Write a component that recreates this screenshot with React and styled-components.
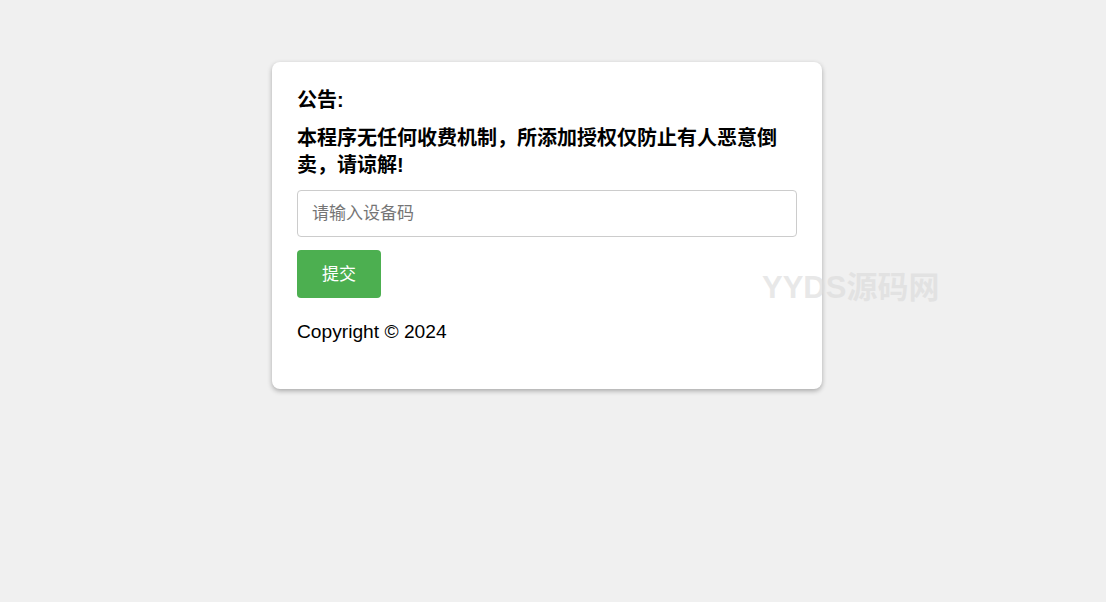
import React, { useState } from "react";
import styled, { createGlobalStyle } from "styled-components";

const GlobalStyle = createGlobalStyle`
  html, body {
    margin: 0;
    padding: 0;
    background: #f0f0f0;
    font-family: "Liberation Sans", "Noto Sans CJK SC", sans-serif;
    color: #000;
  }
`;

const Page = styled.div`
  min-height: 602px;
  padding: 62px 12px 0 0;
  box-sizing: border-box;
  position: relative;
  overflow: hidden;
`;

const Card = styled.div`
  width: 550px;
  margin: 0 auto;
  box-sizing: border-box;
  padding: 25px;
  background: #fff;
  border-radius: 8px;
  box-shadow: 0 2px 5px rgba(0, 0, 0, 0.3);
`;

const Title = styled.h3`
  margin: 0 0 11px;
  font-size: 20px;
  line-height: 27px;
  font-weight: bold;
`;

const Notice = styled.p`
  margin: 0 0 11px;
  max-width: 495px;
  font-size: 20px;
  line-height: 27px;
  font-weight: bold;
`;

const Input = styled.input`
  display: block;
  width: 100%;
  height: 47px;
  box-sizing: border-box;
  padding: 0 14px;
  border: 1px solid #ccc;
  border-radius: 4px;
  font-family: inherit;
  font-size: 17px;
  color: #000;
  outline: none;
  &::placeholder {
    color: #757575;
  }
`;

const SubmitButton = styled.button`
  display: block;
  margin-top: 13px;
  width: 84px;
  height: 48px;
  padding: 0 0 3px;
  border: none;
  border-radius: 4px;
  background: #4caf50;
  color: #fff;
  font-family: inherit;
  font-size: 17px;
  cursor: pointer;
`;

const Copyright = styled.p`
  margin: 22px 0 20px;
  font-size: 19.2px;
  line-height: 24px;
`;

const Watermark = styled.div`
  position: absolute;
  left: 762px;
  top: 269px;
  font-family: "Liberation Sans", "Noto Sans CJK SC", sans-serif;
  font-size: 31px;
  font-weight: bold;
  line-height: 37px;
  color: rgba(220, 220, 220, 0.67);
  pointer-events: none;
  white-space: nowrap;
`;

export default function App() {
  const [code, setCode] = useState("");
  return (
    <>
      <GlobalStyle />
      <Page>
        <Card>
          <Title>公告:</Title>
          <Notice>本程序无任何收费机制，所添加授权仅防止有人恶意倒卖，请谅解!</Notice>
          <Input
            placeholder="请输入设备码"
            value={code}
            onChange={(e) => setCode(e.target.value)}
          />
          <SubmitButton>提交</SubmitButton>
          <Copyright>Copyright © 2024</Copyright>
        </Card>
        <Watermark>YYDS源码网</Watermark>
      </Page>
    </>
  );
}
